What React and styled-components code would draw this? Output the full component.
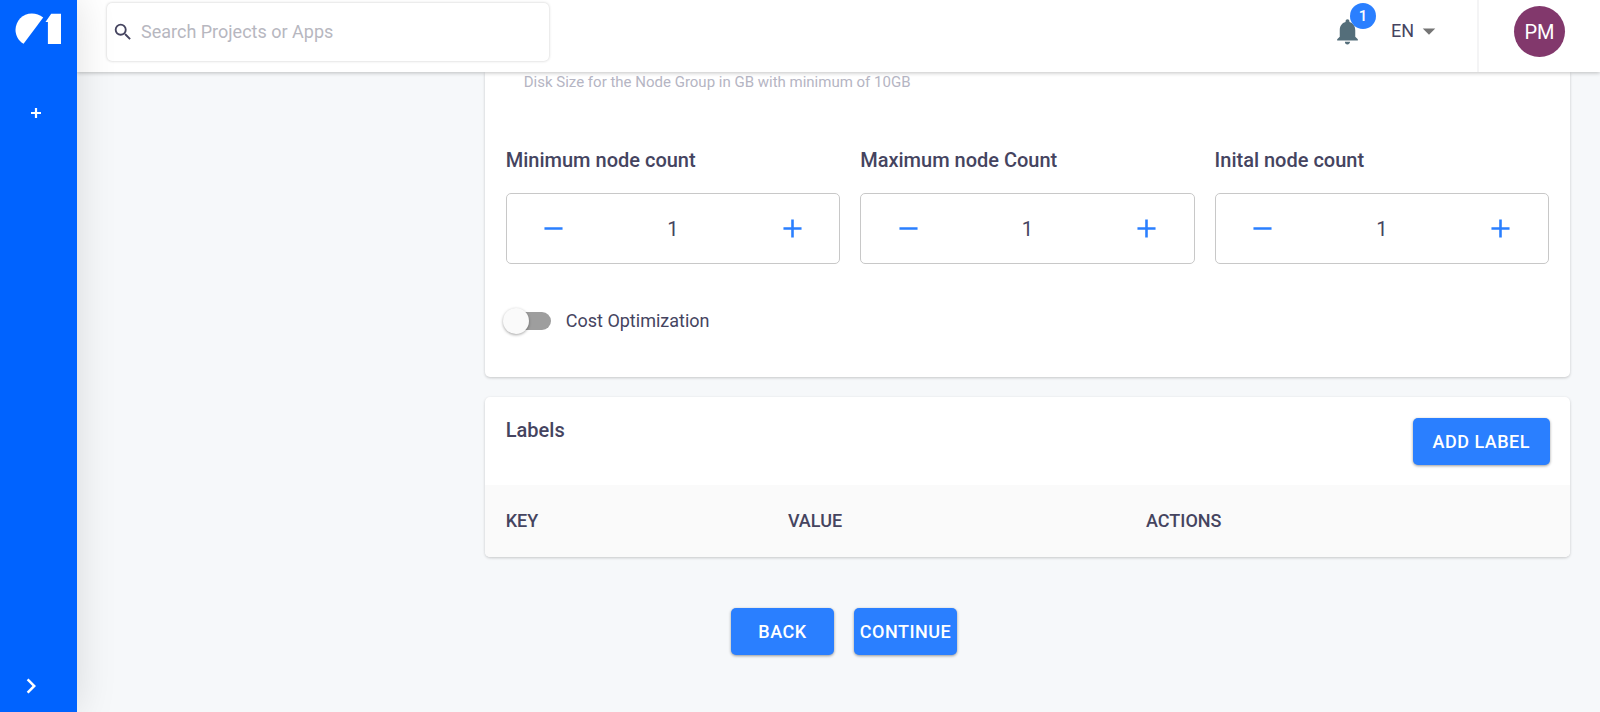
import React, { useState } from "react";
import styled, { createGlobalStyle } from "styled-components";
import {
  MdAdd,
  MdArrowDropDown,
  MdChevronRight,
  MdNotifications,
  MdRemove,
  MdSearch,
} from "react-icons/md";

const GlobalStyle = createGlobalStyle`
  *, *::before, *::after { box-sizing: border-box; }
  body {
    margin: 0;
    background: #f6f8fa;
    color: #45445f;
    font-family: Roboto, "Liberation Sans", sans-serif;
    font-size: 18px;
    line-height: 24px;
  }
  button, input, select { font: inherit; color: inherit; }
  button { cursor: pointer; }
`;

const Shell = styled.div`
  display: flex;
  min-height: 100vh;
`;

const Sidebar = styled.nav`
  position: sticky;
  top: 0;
  z-index: 3;
  flex: 0 0 77px;
  height: 100vh;
  display: flex;
  flex-direction: column;
  align-items: flex-start;
  padding: 13px 15px 11px;
  background: #0063ff;
  box-shadow: 0 0 40px rgba(0, 0, 0, 0.13);
`;

const HomeLink = styled.a`
  display: block;
  height: 32px;
`;

const SidebarButton = styled.button`
  display: flex;
  align-items: center;
  justify-content: center;
  width: ${(p) => p.$width};
  height: 30px;
  margin-top: ${(p) => p.$top};
  padding: 0;
  border: 0;
  background: none;
  color: #fff;
`;

const Page = styled.div`
  flex: 1;
  min-width: 0;
`;

const Header = styled.header`
  position: sticky;
  top: 0;
  z-index: 2;
  display: flex;
  align-items: center;
  height: 72px;
  padding-left: 30px;
  background: #fff;
  box-shadow: 0 1px 4px rgba(0, 0, 0, 0.24);
`;

const SearchBox = styled.label`
  display: flex;
  align-items: center;
  gap: 7px;
  max-width: 442px;
  min-width: 240px;
  height: 58px;
  margin-bottom: 9px;
  padding: 0 5px;
  border-radius: 5px;
  background: #fff;
  box-shadow: 0 0 3px rgba(0, 0, 0, 0.22);
  flex: 1 0 auto;
`;

const SearchInput = styled.input`
  flex: 1;
  min-width: 0;
  padding: 0;
  border: 0;
  outline: 0;
  background: none;
  &::placeholder { color: #b7b7bf; opacity: 1; }
`;

const HeaderTools = styled.div`
  display: flex;
  align-items: center;
  align-self: stretch;
  margin-left: auto;
`;

const BellButton = styled.button`
  position: relative;
  display: flex;
  margin: 0 28px 9px 0;
  padding: 0;
  border: 0;
  background: none;
  color: #546e7a;
`;

const Badge = styled.span`
  position: absolute;
  top: -13px;
  right: -13px;
  width: 26px;
  height: 26px;
  border-radius: 50%;
  background: #2a7fff;
  color: #fff;
  font-size: 15px;
  font-weight: 500;
  line-height: 26px;
  text-align: center;
`;

const Language = styled.label`
  display: flex;
  align-items: center;
  margin: 0 33px 10px 0;
  svg { margin-left: -29px; color: #757575; pointer-events: none; }
`;

const LanguageSelect = styled.select`
  width: 52px;
  padding: 0;
  border: 0;
  appearance: none;
  background: none;
`;

const Account = styled.div`
  align-self: stretch;
  display: flex;
  align-items: flex-start;
  padding: 6px 35px 0;
  border-left: 2px solid #f4f4f5;
`;

const Avatar = styled.button`
  width: 51px;
  height: 51px;
  padding: 0;
  border: 0;
  border-radius: 50%;
  background: #82386c;
  color: #fff;
  font-size: 20px;
`;

const Main = styled.main`
  padding: 0 30px 56px 41px;
`;

const Columns = styled.div`
  display: grid;
  grid-template-columns: minmax(0, 1fr) minmax(0, 3fr);
  gap: 5px;
`;

const Panels = styled.div`
  grid-column: 2;
  display: flex;
  flex-direction: column;
  gap: 20px;
`;

const Card = styled.section`
  overflow: hidden;
  border-radius: ${(p) => (p.$continued ? "0 0 5px 5px" : "5px")};
  background: #fff;
  box-shadow: 0 1px 3px rgba(0, 0, 0, 0.2);
`;

const NodeSettings = styled.div`
  padding: 0 21px 42px;
`;

const Hint = styled.p`
  margin: 0;
  padding-left: 18px;
  color: #b5b5c3;
  font-size: 15px;
  line-height: 20px;
`;

const Counters = styled.div`
  display: grid;
  grid-template-columns: repeat(3, minmax(0, 1fr));
  gap: 20px;
  margin: 56px 0 43px;
`;

const CounterLabel = styled.label`
  display: block;
  margin-bottom: 21px;
  font-size: 20px;
  font-weight: 500;
`;

const CounterBox = styled.div`
  display: flex;
  align-items: center;
  height: 71px;
  padding: 0 19px;
  border: 1px solid #c8c8c8;
  border-radius: 5px;
`;

const StepButton = styled.button`
  display: flex;
  flex: 0 0 56px;
  justify-content: center;
  padding: 0;
  border: 0;
  background: none;
  color: #2a7fff;
`;

const CounterInput = styled.input`
  flex: 1;
  min-width: 0;
  padding: 0;
  border: 0;
  outline: 0;
  background: none;
  font-size: 20px;
  text-align: center;
`;

const SwitchLabel = styled.label`
  display: flex;
  align-items: center;
  gap: 15px;
  width: fit-content;
  height: 28px;
`;

const Switch = styled.input`
  appearance: none;
  display: flex;
  align-items: center;
  width: 45px;
  height: 18px;
  margin: 0;
  border-radius: 9px;
  background: #9e9e9e;
  cursor: pointer;
  &::before {
    content: "";
    flex: none;
    width: 26px;
    height: 26px;
    margin-left: -3px;
    border-radius: 50%;
    background: #fafafa;
    box-shadow: 0 1px 3px rgba(0, 0, 0, 0.35);
  }
  &:checked { background: #94bfff; }
  &:checked::before { margin-left: 22px; background: #2a7fff; }
`;

const CardHeader = styled.div`
  display: flex;
  align-items: flex-start;
  justify-content: space-between;
  padding: 21px 20px 20px 21px;
`;

const CardTitle = styled.h2`
  margin: 0;
  font-size: 20px;
  font-weight: 500;
  line-height: 24px;
`;

const Button = styled.button`
  min-width: 103px;
  height: 47px;
  padding: 0 ${(p) => (p.$wide ? "20px" : "5px")};
  border: 0;
  border-radius: 5px;
  background: #2a7fff;
  box-shadow: 0 1px 3px rgba(0, 0, 0, 0.4);
  color: #fff;
  font-weight: 500;
  letter-spacing: 0.5px;
  text-transform: uppercase;
`;

const Table = styled.table`
  width: 100%;
  border-collapse: collapse;
  table-layout: fixed;
  background: #fafafa;
`;

const HeadCell = styled.th`
  width: ${(p) => p.$width};
  height: 72px;
  padding: 0 21px;
  font-weight: 500;
  text-align: left;
`;

const Actions = styled.div`
  display: flex;
  justify-content: center;
  gap: 20px;
  margin-top: 51px;
`;

function Logo() {
  return (
    <svg width="46" height="32" viewBox="0 0 46 32" fill="#fff" aria-hidden="true">
      <path d="M8.6 30.8C3.6 28 .5 22.600.5 17 .5 7.800 7.800.4 16.800.4c4.200 0 8 1.400 11.400 4.200Z" />
      <path d="M36.200.7H46V31H32.900V9h-2.400Z" />
    </svg>
  );
}

function PlusIcon() {
  return (
    <svg width="10" height="10" viewBox="0 0 10 10" stroke="currentColor" strokeWidth="2.2" aria-hidden="true">
      <path d="M5 0v10M0 5h10" />
    </svg>
  );
}

function Counter({ id, label }) {
  const [count, setCount] = useState(1);
  return (
    <div>
      <CounterLabel htmlFor={id}>{label}</CounterLabel>
      <CounterBox>
        <StepButton type="button" aria-label="Decrease" onClick={() => setCount(Math.max(0, count - 1))}>
          <MdRemove size={31} />
        </StepButton>
        <CounterInput
          id={id}
          inputMode="numeric"
          value={count}
          onChange={(e) => setCount(Number(e.target.value) || 0)}
        />
        <StepButton type="button" aria-label="Increase" onClick={() => setCount(count + 1)}>
          <MdAdd size={31} />
        </StepButton>
      </CounterBox>
    </div>
  );
}

export default function App() {
  return (
    <>
      <GlobalStyle />
      <Shell>
        <Sidebar>
          <HomeLink href="#" aria-label="Home">
            <Logo />
          </HomeLink>
          <SidebarButton type="button" aria-label="Add" $width="42px" $top="53px">
            <PlusIcon />
          </SidebarButton>
          <SidebarButton type="button" aria-label="Expand menu" $width="32px" $top="auto">
            <MdChevronRight size={30} />
          </SidebarButton>
        </Sidebar>
        <Page>
          <Header>
            <SearchBox>
              <MdSearch size={22} />
              <SearchInput type="search" aria-label="Search" placeholder="Search Projects or Apps" />
            </SearchBox>
            <HeaderTools>
              <BellButton type="button" aria-label="Notifications">
                <MdNotifications size={31} />
                <Badge>1</Badge>
              </BellButton>
              <Language>
                <LanguageSelect aria-label="Language" defaultValue="EN">
                  <option>EN</option>
                </LanguageSelect>
                <MdArrowDropDown size={30} />
              </Language>
              <Account>
                <Avatar type="button">PM</Avatar>
              </Account>
            </HeaderTools>
          </Header>
          <Main>
            <Columns>
              <Panels>
                <Card $continued>
                  <NodeSettings>
                    <Hint>Disk Size for the Node Group in GB with minimum of 10GB</Hint>
                    <Counters>
                      <Counter id="min-count" label="Minimum node count" />
                      <Counter id="max-count" label="Maximum node Count" />
                      <Counter id="initial-count" label="Inital node count" />
                    </Counters>
                    <SwitchLabel>
                      <Switch type="checkbox" role="switch" />
                      Cost Optimization
                    </SwitchLabel>
                  </NodeSettings>
                </Card>
                <Card>
                  <CardHeader>
                    <CardTitle>Labels</CardTitle>
                    <Button type="button" $wide>Add label</Button>
                  </CardHeader>
                  <Table>
                    <thead>
                      <tr>
                        <HeadCell scope="col" $width="26%">KEY</HeadCell>
                        <HeadCell scope="col" $width="33%">VALUE</HeadCell>
                        <HeadCell scope="col" $width="41%">ACTIONS</HeadCell>
                      </tr>
                    </thead>
                  </Table>
                </Card>
              </Panels>
            </Columns>
            <Actions>
              <Button type="button">Back</Button>
              <Button type="button">Continue</Button>
            </Actions>
          </Main>
        </Page>
      </Shell>
    </>
  );
}
